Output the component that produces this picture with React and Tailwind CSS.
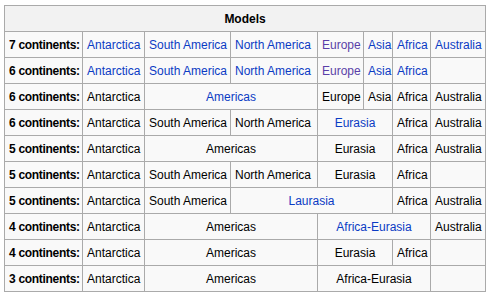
import React from "react";

const L = ({ children, v }) => (
  <span className={v ? "text-[#5a3fa8]" : "text-[#0b3bc4]"}>{children}</span>
);

const td = "border border-[#aaaaaa] px-[4px] py-0 whitespace-nowrap";
const tl = td + " text-left";
const tc = td + " text-center";
const th = td + " text-left font-bold tracking-[-0.3px]";

export default function App() {
  const rows = [
    ["7 continents:", [
      [1, <L>Antarctica</L>], [1, <L>South America</L>], [1, <L>North America</L>], [1, <L v>Europe</L>], [1, <L>Asia</L>], [1, <L>Africa</L>], [1, <L>Australia</L>],
    ]],
    ["6 continents:", [
      [1, <L>Antarctica</L>], [1, <L>South America</L>], [1, <L>North America</L>], [1, <L v>Europe</L>], [1, <L>Asia</L>], [1, <L>Africa</L>], [1, null],
    ]],
    ["6 continents:", [
      [1, "Antarctica"], [2, <L>Americas</L>], [1, "Europe"], [1, "Asia"], [1, "Africa"], [1, "Australia"],
    ]],
    ["6 continents:", [
      [1, "Antarctica"], [1, "South America"], [1, "North America"], [2, <L>Eurasia</L>], [1, "Africa"], [1, "Australia"],
    ]],
    ["5 continents:", [
      [1, "Antarctica"], [2, "Americas"], [2, "Eurasia"], [1, "Africa"], [1, "Australia"],
    ]],
    ["5 continents:", [
      [1, "Antarctica"], [1, "South America"], [1, "North America"], [2, "Eurasia"], [1, "Africa"], [1, null],
    ]],
    ["5 continents:", [
      [1, "Antarctica"], [1, "South America"], [3, <L>Laurasia</L>], [1, "Africa"], [1, "Australia"],
    ]],
    ["4 continents:", [
      [1, "Antarctica"], [2, "Americas"], [3, <L>Africa-Eurasia</L>], [1, "Australia"],
    ]],
    ["4 continents:", [
      [1, "Antarctica"], [2, "Americas"], [2, "Eurasia"], [1, "Africa"], [1, null],
    ]],
    ["3 continents:", [
      [1, "Antarctica"], [2, "Americas"], [3, "Africa-Eurasia"], [1, null],
    ]],
  ];

  return (
    <div className="w-[491px] h-[297px] bg-white pl-[4px] pt-[5px] font-['Liberation_Sans',Arial,sans-serif] text-[12px] text-black">
      <table className="table-fixed border-collapse w-[482px] bg-[#f9f9f9] border border-[#aaaaaa]">
        <colgroup>
          <col className="w-[78px]" />
          <col className="w-[62px]" />
          <col className="w-[86px]" />
          <col className="w-[87px]" />
          <col className="w-[46px]" />
          <col className="w-[29px]" />
          <col className="w-[38px]" />
          <col className="w-[55px]" />
        </colgroup>
        <thead>
          <tr className="h-[26px]">
            <th colSpan={8} className={td + " text-center font-bold bg-[#f2f2f2]"}>Models</th>
          </tr>
        </thead>
        <tbody>
          {rows.map(([label, cells], i) => (
            <tr key={i} className="h-[26px]">
              <td className={th}>{label}</td>
              {cells.map(([span, content], j) => (
                <td key={j} colSpan={span} className={span > 1 ? tc : tl}>
                  {content}
                </td>
              ))}
            </tr>
          ))}
        </tbody>
      </table>
    </div>
  );
}
